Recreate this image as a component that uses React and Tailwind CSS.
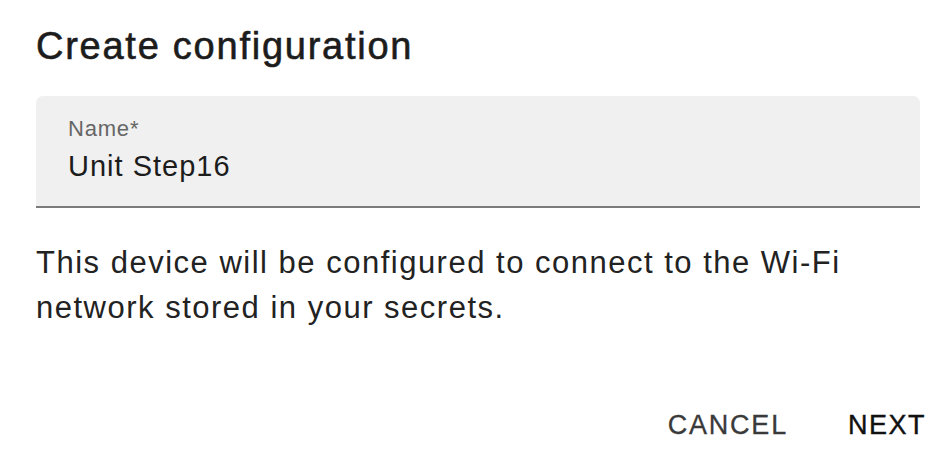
export default function App() {
  return (
    <div className="w-[948px] h-[460px] bg-white font-['Liberation_Sans',Arial,sans-serif] pl-9 pr-7 pt-[22px]">
      {/* Title */}
      <h2 className="text-[38px] leading-[48px] tracking-[1.75px] font-medium text-[#1c1c1c] [-webkit-text-stroke:0.6px_#1c1c1c]">
        Create configuration
      </h2>

      {/* Filled text field */}
      <div className="mt-[26px] h-[112px] bg-[#f0f0f0] rounded-t-[7px] border-b-2 border-[#7b7b7b] px-[32px] pt-[21px]">
        <label className="block text-[22px] leading-[24px] tracking-[0.8px] text-[#666]">Name*</label>
        <div className="mt-[7px] text-[29px] leading-[36px] tracking-[1px] text-[#1c1c1c]">Unit Step16</div>
      </div>

      {/* Description */}
      <p className="mt-8 text-[31px] leading-[45px] tracking-[1.5px] text-[#222]">
        This device will be configured to connect to the Wi-Fi
        <br />
        network stored in your secrets.
      </p>

      {/* Actions */}
      <div className="mt-[79px] flex justify-end gap-[60px] -mr-[6px]">
        <button className="text-[27px] leading-[32px] tracking-[1.8px] font-medium text-[#3a3a3a] [-webkit-text-stroke:0.3px_#3a3a3a]">CANCEL</button>
        <button className="text-[27px] leading-[32px] tracking-[1.5px] font-medium text-[#111] [-webkit-text-stroke:0.4px_#111]">NEXT</button>
      </div>
    </div>
  )
}
